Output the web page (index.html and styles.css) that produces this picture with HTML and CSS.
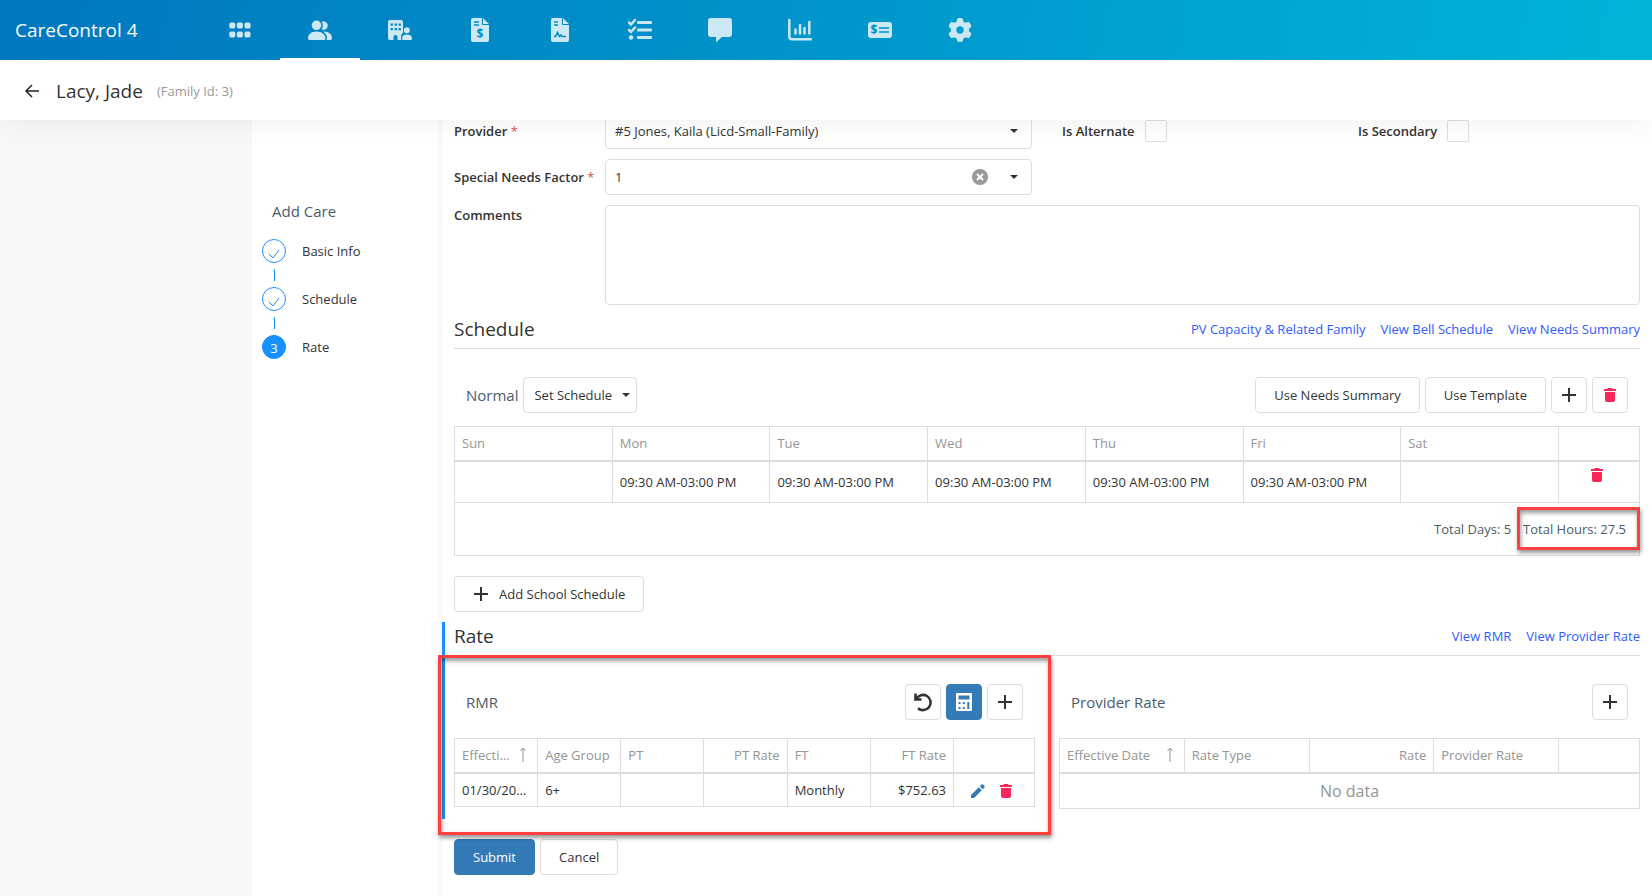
FILE: index.html
```html
<!DOCTYPE html>
<html lang="en">
<head>
    <meta charset="UTF-8">
    <meta name="viewport" content="width=device-width, initial-scale=1.0">
    <title>CareControl 4</title>
    <link rel="stylesheet" href="styles.css">
</head>
<body>

    <!-- Shared icons -->
    <svg class="sprite" aria-hidden="true">
        <symbol id="icon-plus" viewBox="0 0 16 16"><path d="M8 1v14M1 8h14" fill="none" stroke="currentColor" stroke-width="2"/></symbol>
        <symbol id="icon-trash" viewBox="0 0 14 16"><path d="M1 2h3l1-1h4l1 1h3v2H1zM2 5h10v8a2 2 0 0 1-2 2H4a2 2 0 0 1-2-2z" fill="currentColor"/></symbol>
        <symbol id="icon-caret" viewBox="0 0 8 4"><path d="M0 0h8L4 4z" fill="currentColor"/></symbol>
        <symbol id="icon-sort" viewBox="0 0 8 16"><path d="M4 1v14M1.500 4l2.500-3 2.500 3" fill="none" stroke="currentColor"/></symbol>
        <symbol id="icon-tick" viewBox="0 0 12 12"><path d="M1 6l4 4 6-8" fill="none" stroke="currentColor"/></symbol>
    </svg>

    <!-- Header -->
    <header class="header">
        <div class="topbar">
            <a class="brand" href="#">CareControl 4</a>
            <nav class="nav">
                <a href="#" aria-label="Dashboard"><svg viewBox="0 0 24 24"><rect x="1.300" y="4.500" width="6" height="6" rx="1.800"/><rect x="8.900" y="4.500" width="6" height="6" rx="1.800"/><rect x="16.500" y="4.500" width="6" height="6" rx="1.800"/><rect x="1.300" y="13.500" width="6" height="6" rx="1.800"/><rect x="8.900" y="13.500" width="6" height="6" rx="1.800"/><rect x="16.500" y="13.500" width="6" height="6" rx="1.800"/></svg></a>
                <a href="#" class="active" aria-label="Families"><svg viewBox="0 0 24 24"><circle cx="8.500" cy="7.300" r="4.800"/><path d="M13.600 11.300a6.500 6.500 0 0 0 0-7.400 4.200 4.200 0 1 1 0 7.400zM0 20.600c0-4.400 3.200-7.200 8.500-7.200s9 2.800 9 7.200c0 .9-.5 1.400-1.400 1.400H1.400C.5 22 0 21.500 0 20.600zM15.200 13.500c5.300-.5 8.800 2.600 8.800 6.800 0 1.200-.5 1.700-1.600 1.700h-3.700c.9-3.500-.8-6.600-3.500-8.500z"/></svg></a>
                <a href="#" aria-label="Providers"><svg viewBox="0 0 24 24"><path fill-rule="evenodd" d="M2 2h11q2 0 2 2v10.500q-2 1.500-2 5.500-.2 1.500.5 2H9.500v-3a2 2 0 0 0-4 0v3H2q-2 0-2-2V4q0-2 2-2zm.600 3.500v2.300h2.300V5.500zm4 0v2.300h2.300V5.500zm4 0v2.300h2.300V5.500zm-8 4.500v2.300h2.300V10zm4 0v2.300h2.300V10zm4 0v2.300h2.300V10z"/><circle cx="18.800" cy="12.300" r="3"/><path d="M14 20.500c0-2.700 1.800-4 5-4s5 1.300 5 4q0 1.500-1.200 1.500h-7.600q-1.200 0-1.200-1.500z"/></svg></a>
                <a href="#" aria-label="Invoices"><svg viewBox="0 0 24 24"><path d="M5 0h9v6q0 1 1 1h6v15q0 2-2 2H5q-2 0-2-2V2q0-2 2-2zM15 0l6 6h-6z"/><path class="cut" d="M6 4h5M6 7h5"/><text class="cut-text" x="12" y="20" font-size="12">$</text></svg></a>
                <a href="#" aria-label="Contracts"><svg viewBox="0 0 24 24"><path d="M5 0h9v6q0 1 1 1h6v15q0 2-2 2H5q-2 0-2-2V2q0-2 2-2zM15 0l6 6h-6z"/><path class="cut" d="M6 4h4M6 7h4M6 18.500h1.500l2-4 2 4 1.500-1.500 1 1.500h4"/></svg></a>
                <a href="#" aria-label="Tasks"><svg viewBox="0 0 24 24"><path class="line" d="M1 4.500l2 2 4-4.500M1 12l2 2 4-4.500"/><circle cx="3" cy="19.500" r="2.200"/><rect x="9" y="3" width="15" height="3" rx="1"/><rect x="9" y="10.500" width="15" height="3" rx="1"/><rect x="9" y="18" width="15" height="3" rx="1"/></svg></a>
                <a href="#" aria-label="Messages"><svg viewBox="0 0 24 24"><path d="M3 0h18q3 0 3 3v13q0 3-3 3h-7l-5.300 4.700q-.7.500-.7-.4V19H3q-3 0-3-3V3q0-3 3-3z"/></svg></a>
                <a href="#" aria-label="Reports"><svg viewBox="0 0 24 24"><path class="line" d="M1.300 2v16.500q0 2.800 2.800 2.800H23M7.500 11.500v4M12 7v8.500M16.500 10v5.500M21.300 4v11.500"/></svg></a>
                <a href="#" aria-label="Payments"><svg viewBox="0 0 24 24"><rect y="4" width="24" height="16" rx="3"/><text class="cut-text" x="6" y="16" font-size="12">$</text><path class="cut" d="M11 10h10M11 14h10"/></svg></a>
                <a href="#" aria-label="Settings"><svg viewBox="0 0 512 512"><path d="M495.900 166.600c3.200 8.700.5 18.400-6.400 24.600l-43.300 39.400c1.100 8.300 1.700 16.800 1.700 25.400s-.6 17.100-1.700 25.400l43.300 39.400c6.900 6.200 9.600 15.900 6.400 24.600-4.400 11.900-9.700 23.300-15.800 34.300l-4.700 8.100c-6.600 11-14 21.400-22.100 31.200-5.900 7.200-15.700 9.600-24.500 6.800l-55.700-17.700c-13.400 10.300-28.200 18.900-44 25.400l-12.500 57.100c-2 9.100-9 16.300-18.200 17.800-13.800 2.300-28 3.500-42.500 3.500s-28.700-1.200-42.500-3.500c-9.200-1.500-16.200-8.700-18.200-17.800l-12.500-57.100c-15.800-6.500-30.600-15.100-44-25.400L83.100 425.900c-8.800 2.800-18.600.3-24.500-6.800-8.100-9.800-15.500-20.200-22.100-31.200l-4.700-8.100c-6.100-11-11.400-22.400-15.800-34.300-3.200-8.700-.5-18.400 6.400-24.600l43.300-39.400C64.600 273.100 64 264.600 64 256s.6-17.100 1.700-25.400L22.400 191.200c-6.900-6.200-9.600-15.900-6.400-24.600 4.400-11.900 9.700-23.300 15.800-34.300l4.700-8.100c6.600-11 14-21.400 22.100-31.200 5.900-7.200 15.700-9.600 24.500-6.800l55.700 17.700c13.400-10.300 28.200-18.900 44-25.400l12.500-57.100c2-9.100 9-16.300 18.200-17.800C227.300 1.200 241.500 0 256 0s28.700 1.200 42.500 3.500c9.200 1.500 16.200 8.700 18.200 17.800l12.500 57.100c15.800 6.500 30.600 15.100 44 25.400l55.700-17.700c8.800-2.800 18.600-.3 24.500 6.800 8.100 9.800 15.500 20.200 22.100 31.200l4.700 8.100c6.100 11 11.400 22.400 15.800 34.300zM256 336c44.200 0 80-35.800 80-80s-35.800-80-80-80-80 35.800-80 80 35.800 80 80 80z"/></svg></a>
            </nav>
        </div>
        <div class="titlebar">
            <button type="button" class="back" aria-label="Back"><svg viewBox="0 0 14 14"><path d="M14 7H1M7 1L1 7l6 6" fill="none" stroke="currentColor" stroke-width="1.500"/></svg></button>
            <h1>Lacy, Jade</h1>
            <span class="family-id">(Family Id: 3)</span>
        </div>
    </header>

    <div class="page">
        <div class="gutter"></div>

        <!-- Steps -->
        <aside class="sidebar">
            <h2>Add Care</h2>
            <ol class="steps">
                <li><span class="dot"><svg><use href="#icon-tick"/></svg></span>Basic Info</li>
                <li><span class="dot"><svg><use href="#icon-tick"/></svg></span>Schedule</li>
                <li class="current"><span class="dot">3</span>Rate</li>
            </ol>
        </aside>

        <!-- Main Content -->
        <main class="content">
            <form>
                <div class="form-row">
                    <div class="field">
                        <label for="provider">Provider <span class="required">*</span></label>
                        <div class="select">
                            <select id="provider"><option>#5 Jones, Kaila (Licd-Small-Family)</option></select>
                            <svg class="caret"><use href="#icon-caret"/></svg>
                        </div>
                    </div>
                    <div class="check"><label for="alternate">Is Alternate</label><input type="checkbox" id="alternate"></div>
                    <div class="check"><label for="secondary">Is Secondary</label><input type="checkbox" id="secondary"></div>
                </div>
                <div class="form-row">
                    <div class="field">
                        <label for="factor">Special Needs Factor <span class="required">*</span></label>
                        <div class="select">
                            <select id="factor"><option>1</option></select>
                            <button type="button" class="clear" aria-label="Clear"><svg viewBox="0 0 16 16"><circle cx="8" cy="8" r="8" fill="#999"/><path d="M5 5l6 6M11 5l-6 6" stroke="#fff" stroke-width="2"/></svg></button>
                            <svg class="caret"><use href="#icon-caret"/></svg>
                        </div>
                    </div>
                </div>
                <div class="field comments">
                    <label for="comments">Comments</label>
                    <textarea id="comments"></textarea>
                </div>

                <!-- Schedule -->
                <section>
                    <div class="section-head">
                        <h2>Schedule</h2>
                        <div class="links">
                            <a href="#">PV Capacity &amp; Related Family</a>
                            <a href="#">View Bell Schedule</a>
                            <a href="#">View Needs Summary</a>
                        </div>
                    </div>
                    <div class="toolbar">
                        <h3>Normal</h3>
                        <button type="button" class="btn btn-menu">Set Schedule <svg class="caret-inline"><use href="#icon-caret"/></svg></button>
                        <span class="spacer"></span>
                        <button type="button" class="btn">Use Needs Summary</button>
                        <button type="button" class="btn">Use Template</button>
                        <button type="button" class="btn btn-icon" aria-label="Add"><svg><use href="#icon-plus"/></svg></button>
                        <button type="button" class="btn btn-icon danger" aria-label="Delete"><svg><use href="#icon-trash"/></svg></button>
                    </div>
                    <table class="grid schedule">
                        <colgroup><col span="7"><col class="col-actions"></colgroup>
                        <thead>
                            <tr><th>Sun</th><th>Mon</th><th>Tue</th><th>Wed</th><th>Thu</th><th>Fri</th><th>Sat</th><th></th></tr>
                        </thead>
                        <tbody>
                            <tr>
                                <td></td>
                                <td>09:30 AM-03:00 PM</td>
                                <td>09:30 AM-03:00 PM</td>
                                <td>09:30 AM-03:00 PM</td>
                                <td>09:30 AM-03:00 PM</td>
                                <td>09:30 AM-03:00 PM</td>
                                <td></td>
                                <td class="actions"><button type="button" class="icon danger" aria-label="Delete row"><svg><use href="#icon-trash"/></svg></button></td>
                            </tr>
                        </tbody>
                        <tfoot>
                            <tr><td colspan="8"><span>Total Days: 5</span><span class="total-hours">Total Hours: 27.5</span></td></tr>
                        </tfoot>
                    </table>
                    <button type="button" class="btn add-school"><svg><use href="#icon-plus"/></svg>Add School Schedule</button>
                </section>

                <!-- Rate -->
                <section class="rate">
                    <div class="section-head">
                        <h2>Rate</h2>
                        <div class="links">
                            <a href="#">View RMR</a>
                            <a href="#">View Provider Rate</a>
                        </div>
                    </div>
                    <div class="panels">
                        <div class="panel highlight">
                            <div class="toolbar">
                                <h3>RMR</h3>
                                <span class="spacer"></span>
                                <button type="button" class="btn btn-icon" aria-label="Reset"><svg class="large" viewBox="0 0 20 20"><path d="M2.500 1.500v6h6M3.200 7.200A7.600 7.600 0 1 1 5 16.200" fill="none" stroke="currentColor" stroke-width="2.600"/></svg></button>
                                <button type="button" class="btn btn-icon primary" aria-label="Calculate"><svg class="large" viewBox="0 0 20 20"><path fill="currentColor" fill-rule="evenodd" d="M3 1h14q1 0 1 1v16q0 1-1 1H3q-1 0-1-1V2q0-1 1-1zm1.500 2.500v4h11v-4zm0 6.500v2h2v-2zm4.300 0v2h2v-2zm4.500 0v7h2v-7zm-8.800 5v2h2v-2zm4.300 0v2h2v-2z"/></svg></button>
                                <button type="button" class="btn btn-icon" aria-label="Add RMR"><svg><use href="#icon-plus"/></svg></button>
                            </div>
                            <table class="grid">
                                <colgroup><col span="6"><col class="col-actions"></colgroup>
                                <thead>
                                    <tr>
                                        <th><div class="sorted"><span>Effective Date</span><svg><use href="#icon-sort"/></svg></div></th>
                                        <th>Age Group</th><th>PT</th><th class="num">PT Rate</th><th>FT</th><th class="num">FT Rate</th><th></th>
                                    </tr>
                                </thead>
                                <tbody>
                                    <tr>
                                        <td>01/30/2023</td><td>6+</td><td></td><td></td><td>Monthly</td><td class="num">$752.63</td>
                                        <td class="actions">
                                            <button type="button" class="icon edit" aria-label="Edit"><svg viewBox="0 0 14 16"><path d="M0 15v-3l7.800-7.800 3 3L3 15zM8.800 3.200l1.600-1.600q.8-.8 1.600 0l1.400 1.400q.8.8 0 1.600l-1.600 1.600z" fill="currentColor"/></svg></button>
                                            <button type="button" class="icon danger" aria-label="Delete"><svg><use href="#icon-trash"/></svg></button>
                                        </td>
                                    </tr>
                                </tbody>
                            </table>
                        </div>
                        <div class="panel">
                            <div class="toolbar">
                                <h3>Provider Rate</h3>
                                <span class="spacer"></span>
                                <button type="button" class="btn btn-icon" aria-label="Add provider rate"><svg><use href="#icon-plus"/></svg></button>
                            </div>
                            <table class="grid">
                                <colgroup><col span="4"><col class="col-actions"></colgroup>
                                <thead>
                                    <tr>
                                        <th><div class="sorted"><span>Effective Date</span><svg><use href="#icon-sort"/></svg></div></th>
                                        <th>Rate Type</th><th class="num">Rate</th><th>Provider Rate</th><th></th>
                                    </tr>
                                </thead>
                                <tbody>
                                    <tr><td class="empty" colspan="5">No data</td></tr>
                                </tbody>
                            </table>
                        </div>
                    </div>
                </section>

                <div class="form-actions">
                    <button type="submit" class="btn primary">Submit</button>
                    <button type="button" class="btn">Cancel</button>
                </div>
            </form>
        </main>
    </div>

</body>
</html>
```

FILE: styles.css
```css
* {
    box-sizing: border-box;
}

body {
    margin: 0;
    font-family: "Open Sans", "Noto Sans", sans-serif;
    font-size: 13px;
    line-height: 20px;
    color: #333;
    background-color: #fff;
}

h1, h2, h3 {
    margin: 0;
    font-weight: 400;
}

button, select, textarea {
    font: inherit;
    color: inherit;
}

button {
    cursor: pointer;
}

svg {
    display: block;
    flex: none;
}

.sprite {
    position: absolute;
    width: 0;
    height: 0;
}

/* Header */
.header {
    position: sticky;
    top: 0;
    z-index: 10;
    background-color: #fff;
    box-shadow: 0 0 30px rgba(0, 0, 0, 0.07);
}

.topbar {
    display: flex;
    height: 60px;
    background: linear-gradient(100deg, #0077be, #00b4d8);
}

.brand {
    width: 200px;
    padding-left: 15px;
    font-size: 19px;
    line-height: 60px;
    color: #fff;
    text-decoration: none;
}

.nav {
    display: flex;
}

.nav a {
    display: flex;
    align-items: center;
    justify-content: center;
    width: 80px;
    border-top: 2px solid transparent;
    border-bottom: 2px solid transparent;
}

.nav a.active {
    border-bottom-color: #fff;
}

.nav svg {
    width: 24px;
    height: 24px;
    fill: #cce8f4;
}

.nav .line {
    fill: none;
    stroke: #cce8f4;
    stroke-width: 2.5;
    stroke-linecap: round;
}

.nav .cut {
    fill: none;
    stroke: #008cc6;
    stroke-width: 1.5;
}

.nav .cut-text {
    fill: #008cc6;
    font-weight: 700;
    text-anchor: middle;
}

.titlebar {
    display: flex;
    align-items: center;
    height: 60px;
    padding: 2px 25px 0;
}

.back {
    padding: 0;
    border: none;
    background: none;
    color: #222;
}

.back svg {
    width: 14px;
    height: 14px;
}

.titlebar h1 {
    margin-left: 17px;
    font-size: 19px;
    font-weight: 500;
}

.family-id {
    margin-left: 14px;
    color: #999;
}

/* Page */
.page {
    display: flex;
    min-height: calc(100vh - 120px);
}

.gutter {
    width: 252px;
    background-color: #f8f8f8;
}

/* Sidebar */
.sidebar {
    width: 190px;
    padding: 81px 10px 0;
    background: linear-gradient(to left, #f5f5f5, #fff 6px);
}

.sidebar h2 {
    margin-left: 10px;
    font-size: 15px;
    color: #4a5c6c;
}

.steps {
    margin: 18px 0 0;
    padding: 0;
    list-style: none;
}

.steps li {
    position: relative;
    display: flex;
    align-items: center;
    gap: 16px;
    height: 24px;
    margin-bottom: 24px;
}

.steps li + li::before {
    content: "";
    position: absolute;
    left: 12px;
    top: -18px;
    height: 12px;
    border-left: 1px solid #1890ff;
}

.dot {
    display: flex;
    align-items: center;
    justify-content: center;
    width: 24px;
    height: 24px;
    padding-top: 6px;
    border: 1px solid #1890ff;
    border-radius: 50%;
    color: #1890ff;
}

.dot svg {
    width: 12px;
    height: 12px;
}

.current .dot {
    padding-top: 2px;
    background-color: #1890ff;
    color: #fff;
}

/* Main Content */
.content {
    flex: 1;
    min-width: 0;
    margin-top: -7px;
    padding: 0 12px 12px;
}

.form-row {
    display: grid;
    grid-template-columns: 608fr 296fr 282fr;
    margin-bottom: 10px;
}

.field {
    display: flex;
    align-items: center;
    padding-right: 30px;
}

.field label {
    flex: none;
    width: 151px;
    font-weight: 600;
}

.required {
    font-weight: 400;
    color: #d9534f;
}

.select {
    position: relative;
    flex: 1;
}

.select select {
    display: block;
    width: 100%;
    height: 36px;
    padding: 0 9px;
    border: 1px solid #ddd;
    border-radius: 4px;
    background-color: #fff;
    appearance: none;
}

.caret {
    position: absolute;
    right: 14px;
    top: 16px;
    width: 8px;
    height: 4px;
    pointer-events: none;
}

.clear {
    position: absolute;
    right: 44px;
    top: 10px;
    padding: 0;
    border: none;
    background: none;
}

.clear svg {
    width: 16px;
    height: 16px;
}

.check {
    display: flex;
    align-items: center;
    gap: 10px;
    font-weight: 600;
}

.check input {
    width: 22px;
    height: 22px;
    margin: 0;
    border: 1px solid #ddd;
    border-radius: 2px;
    background-color: #fff;
    appearance: none;
}

.comments {
    align-items: flex-start;
    padding-right: 0;
}

.comments textarea {
    display: block;
    flex: 1;
    height: 100px;
    padding: 8px;
    border: 1px solid #ddd;
    border-radius: 4px;
    resize: none;
}

.section-head {
    display: flex;
    align-items: center;
    justify-content: space-between;
    height: 34px;
    padding-bottom: 6px;
    border-bottom: 1px solid #ddd;
}

.section-head h2 {
    font-size: 19px;
}

.comments + section {
    padding-top: 10px;
}

.links {
    display: flex;
    gap: 15px;
}

.links a {
    color: #2f5bff;
    text-decoration: none;
}

/* Toolbars and buttons */
.toolbar {
    display: flex;
    align-items: center;
    gap: 5px;
    margin-top: 28px;
    padding: 0 12px;
}

.toolbar h3 {
    font-size: 15px;
    color: #4a5c6c;
}

.spacer {
    flex: 1;
}

.btn {
    display: inline-flex;
    align-items: center;
    justify-content: center;
    height: 36px;
    padding: 0 18px;
    border: 1px solid #ddd;
    border-radius: 4px;
    background-color: #fff;
}

.btn svg {
    width: 16px;
    height: 16px;
}

.btn-menu {
    gap: 10px;
    padding: 0 6px 0 10px;
}

.btn .caret-inline {
    width: 8px;
    height: 4px;
}

.btn-icon {
    width: 36px;
    padding: 0;
}

.btn .large {
    width: 20px;
    height: 20px;
}

.primary {
    border-color: #337ab7;
    background-color: #337ab7;
    color: #fff;
}

.danger {
    color: #f8285a;
}

.edit {
    color: #337ab7;
}

.add-school {
    gap: 10px;
    margin-top: 20px;
}

/* Tables */
.grid {
    width: 100%;
    margin-top: 13px;
    border-collapse: collapse;
    table-layout: fixed;
}

.grid th,
.grid td {
    height: 34px;
    padding: 0 7px;
    overflow: hidden;
    border: 1px solid #ddd;
    font-weight: 400;
    text-align: left;
    text-overflow: ellipsis;
    white-space: nowrap;
}

.grid th {
    border-bottom-width: 2px;
    color: #959595;
}

.grid .num {
    text-align: right;
}

.grid .col-actions {
    width: 81px;
}

.sorted {
    display: flex;
    align-items: center;
    justify-content: space-between;
    gap: 8px;
    padding-right: 3px;
}

.sorted span {
    overflow: hidden;
    text-overflow: ellipsis;
}

.sorted svg {
    width: 8px;
    height: 16px;
}

.grid .actions {
    padding: 0 10px 0 6px;
    text-align: center;
}

.icon {
    padding: 0 5px;
    border: none;
    background: none;
    vertical-align: middle;
}

.icon svg {
    width: 14px;
    height: 16px;
}

.grid .empty {
    height: 36px;
    font-size: 16px;
    color: #959595;
    text-align: center;
}

.schedule tbody td {
    height: 42px;
}

.schedule .actions {
    padding-top: 2px;
    vertical-align: top;
}

.schedule tfoot td {
    height: 53px;
    padding-right: 13px;
    overflow: visible;
    color: #4a5c6c;
    text-align: right;
}

.total-hours {
    position: relative;
    margin-left: 12px;
}

/* Red callout frames */
.total-hours::after,
.highlight::after {
    content: "";
    position: absolute;
    border: 3px solid #ff4040;
    box-shadow: 1px 3px 4px rgba(0, 0, 0, 0.4), inset 1px 3px 4px rgba(0, 0, 0, 0.4);
    pointer-events: none;
}

.total-hours::after {
    inset: -13px -14px -12px -6px;
}

.highlight::after {
    inset: -1px -16px -16px;
}

/* Rate */
.rate {
    margin: 10px 0 20px -12px;
    padding-left: 9px;
    border-left: 3px solid #1890ff;
}

.panels {
    display: grid;
    grid-template-columns: 1fr 1fr;
    gap: 24px;
}

.panel {
    position: relative;
    min-width: 0;
    padding-bottom: 10px;
}

.panel .toolbar {
    height: 36px;
}

.panel .grid {
    margin-top: 18px;
}

.form-actions {
    display: flex;
    gap: 5px;
}
```
